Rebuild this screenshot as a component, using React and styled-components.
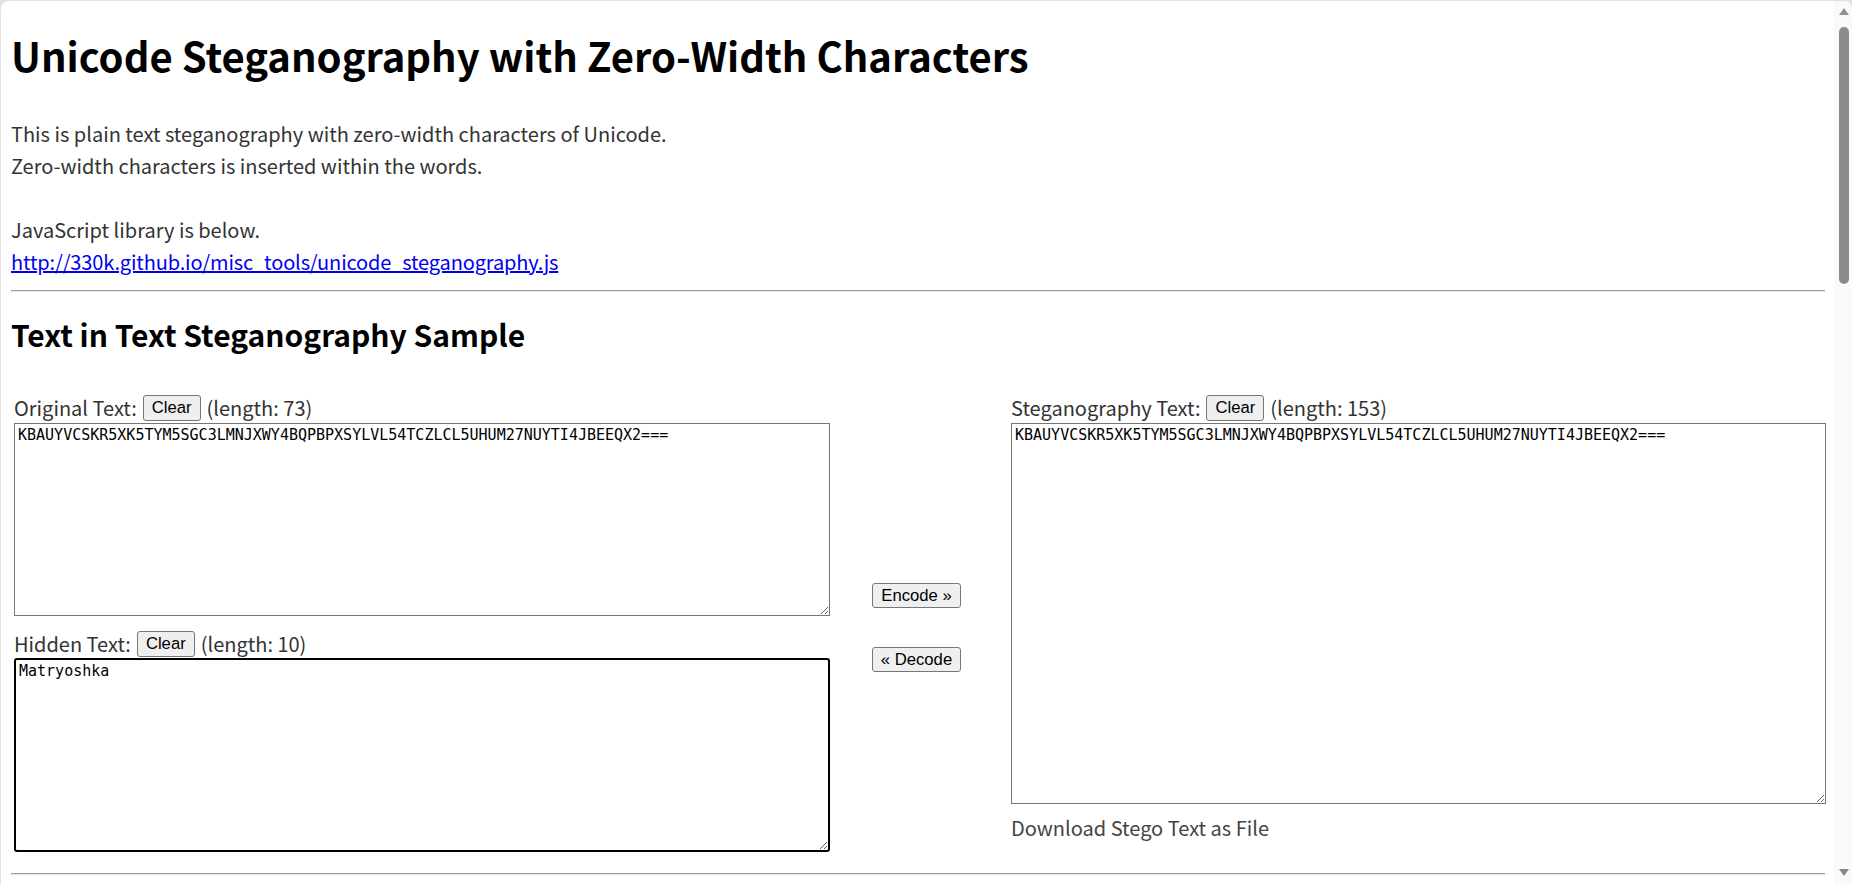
import styled, { createGlobalStyle } from 'styled-components'

const GlobalStyle = createGlobalStyle`
  html, body {
    margin: 0;
    height: 100%;
    overflow: hidden;
  }
  body {
    background: #e9dfdf;
  }
`

const Window = styled.div`
  display: flex;
  height: 100vh;
  box-sizing: border-box;
  padding: 1px 0 0 1px;
  background: #e9dfdf;
`

const Page = styled.main`
  flex: 1;
  min-width: 0;
  overflow: hidden;
  background: #fff;
  border-top-left-radius: 8px;
  padding: 30px 9px 0 10px;
  color: #333;
  font-family: "Noto Sans CJK JP", "Noto Sans", sans-serif;
  font-size: 20px;
`

const Title = styled.h1`
  margin: 0 0 39px;
  font-size: 40px;
  line-height: 48px;
  font-weight: 700;
  color: #000;
`

const Intro = styled.p`
  margin: 0;
  line-height: 32px;

  a {
    color: #0000ee;
    text-decoration: underline;
    letter-spacing: -0.15px;
  }
`

const Rule = styled.hr`
  margin: ${p => p.$top}px 0 0;
  height: 0;
  border: 0;
  border-top: 1px solid #9e9e9e;
  border-bottom: 1px solid #e4e4e4;
`

const Heading = styled.h2`
  margin: 24px 0 0;
  font-size: 30px;
  line-height: 36px;
  font-weight: 700;
  color: #000;
`

const Workbench = styled.div`
  display: grid;
  grid-template-columns: 816px 181px 815px;
  align-items: start;
  margin-top: 43px;
  padding-left: 3px;
`

const Column = styled.div`
  display: flex;
  flex-direction: column;
`

const LabelRow = styled.div`
  display: flex;
  align-items: center;
  gap: 6px;
  height: 26px;
  padding-left: 0;
  margin-top: ${p => (p.$spaced ? 15 : 0)}px;
  line-height: 26px;
`

const Button = styled.button`
  box-sizing: border-box;
  height: ${p => (p.$tall ? 26 : 25)}px;
  padding: 0 8px;
  font-family: "Liberation Sans", Arial, sans-serif;
  font-size: 16.67px;
  color: #000;
  background: #efefef;
  border: 1px solid #767676;
  border-radius: 3px;
`

const Field = styled.textarea`
  box-sizing: border-box;
  display: block;
  width: 100%;
  height: ${p => p.$h}px;
  margin: ${p => (p.$focused ? 1 : 2)}px 0 0;
  padding: 2px 3px;
  font-family: "DejaVu Sans Mono", "Liberation Mono", monospace;
  font-size: 15px;
  color: #000;
  background: #fff;
  border: ${p => (p.$focused ? '2px solid #000' : '1px solid #767676')};
  border-radius: ${p => (p.$focused ? 3 : 0)}px;
  outline: none;
`

const Actions = styled.div`
  display: flex;
  flex-direction: column;
  align-items: center;
  gap: 39px;
  padding: 188px 8px 0 0;
`

const Download = styled.div`
  margin-top: 8px;
  line-height: 32px;
  color: #444;
`

const ScrollTrack = styled.div`
  flex: none;
  width: 18px;
  display: flex;
  flex-direction: column;
  align-items: center;
  background: #fafafa;
  border-top-right-radius: 8px;
  padding: 7px 0 9px;
  box-sizing: border-box;
`

const Arrow = styled.div`
  flex: none;
  width: 0;
  height: 0;
  margin-left: 2px;
  border-left: 5px solid transparent;
  border-right: 5px solid transparent;
  ${p => (p.$down ? 'border-top: 7px solid #888;' : 'border-bottom: 7px solid #929292;')}
`

const Thumb = styled.div`
  flex: none;
  width: 10px;
  height: 257px;
  margin: 12px 0 0 2px;
  border-radius: 5px;
  background: #8b8b8b;
`

const Spacer = styled.div`
  flex: 1;
`

const original = 'KBAUYVCSKR5XK5TYM5SGC3LMNJXWY4BQPBPXSYLVL54TCZLCL5UHUM27NUYTI4JBEEQX2==='

export default function App() {
  return (
    <>
      <GlobalStyle />
      <Window>
        <Page>
          <Title>Unicode Steganography with Zero-Width Characters</Title>
          <Intro>
            This is plain text steganography with zero-width characters of Unicode.<br />
            Zero-width characters is inserted within the words.<br />
            <br />
            JavaScript library is below.<br />
            <a href="#lib">http://330k.github.io/misc_tools/unicode_steganography.js</a>
          </Intro>
          <Rule $top={12} />
          <Heading>Text in Text Steganography Sample</Heading>

          <Workbench>
            <Column>
              <LabelRow>
                <span>Original Text:</span>
                <Button $tall>Clear</Button>
                <span>(length: 73)</span>
              </LabelRow>
              <Field $h={193} defaultValue={original} />
              <LabelRow $spaced>
                <span>Hidden Text:</span>
                <Button $tall>Clear</Button>
                <span>(length: 10)</span>
              </LabelRow>
              <Field $h={194} $focused defaultValue="Matryoshka" />
            </Column>

            <Actions>
              <Button>Encode »</Button>
              <Button>« Decode</Button>
            </Actions>

            <Column>
              <LabelRow>
                <span>Steganography Text:</span>
                <Button $tall>Clear</Button>
                <span>(length: 153)</span>
              </LabelRow>
              <Field $h={381} defaultValue={original} />
              <Download>Download Stego Text as File</Download>
            </Column>
          </Workbench>

          <Rule $top={21} />
        </Page>

        <ScrollTrack>
          <Arrow />
          <Thumb />
          <Spacer />
          <Arrow $down />
        </ScrollTrack>
      </Window>
    </>
  )
}
